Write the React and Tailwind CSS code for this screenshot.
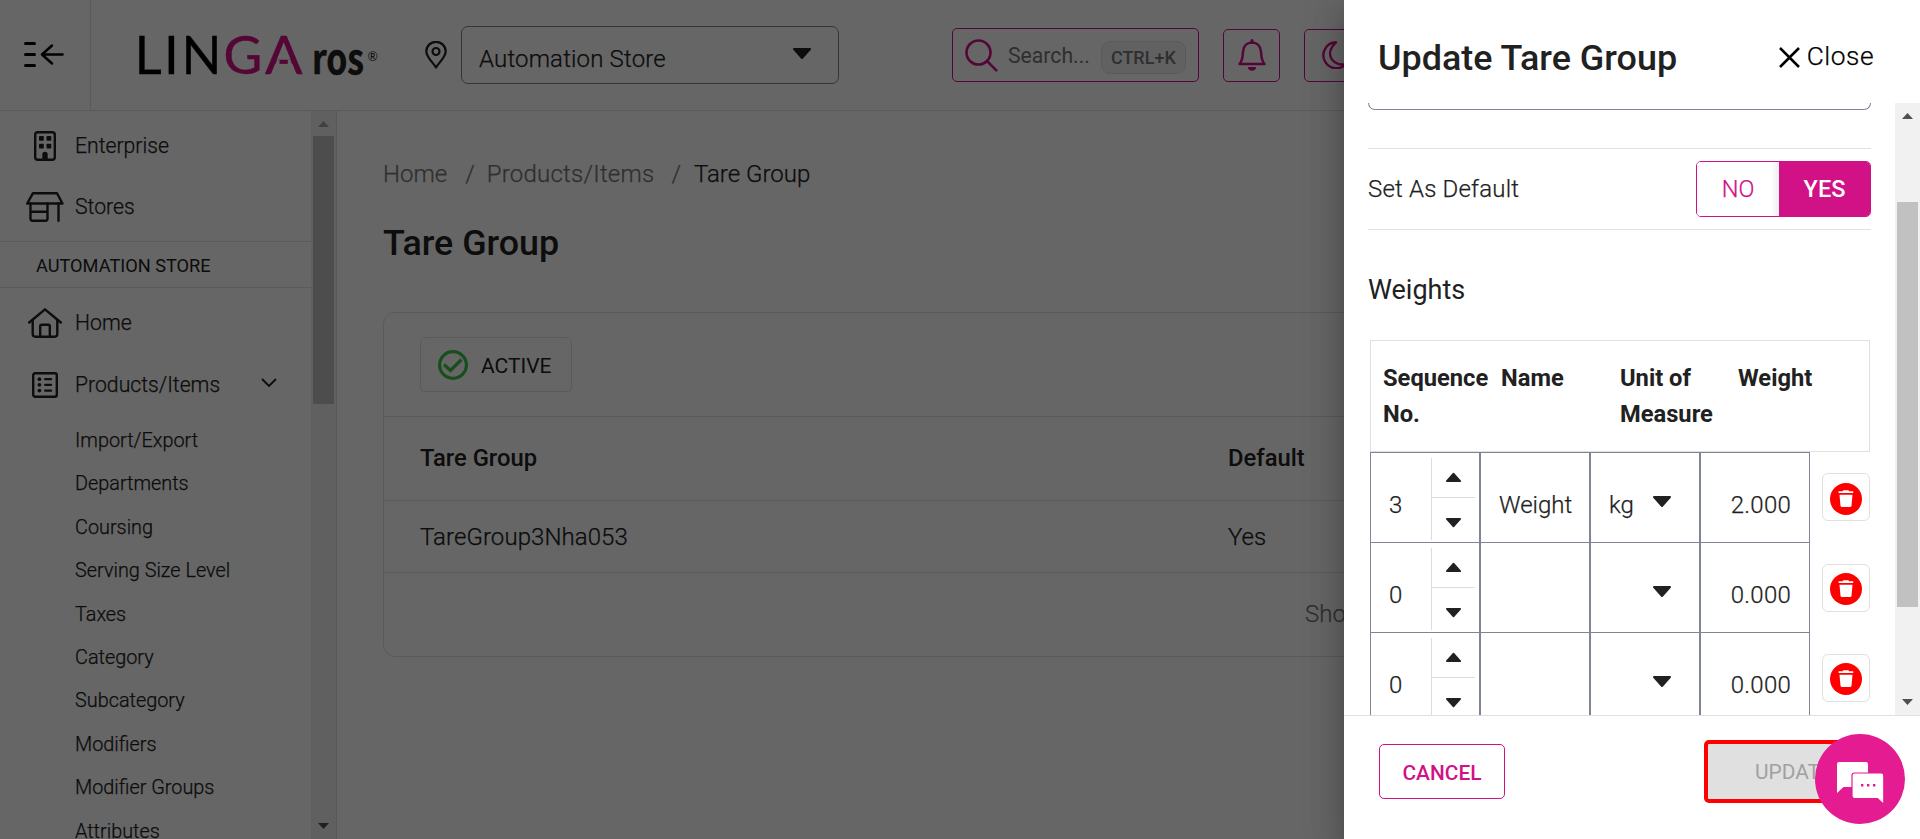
import React from "react";

const SUB_ITEMS = [
  "Import/Export", "Departments", "Coursing", "Serving Size Level", "Taxes",
  "Category", "Subcategory", "Modifiers", "Modifier Groups", "Attributes",
];

const ROWS = [
  { seq: "3", name: "Weight", unit: "kg", weight: "2.000" },
  { seq: "0", name: "", unit: "", weight: "0.000" },
  { seq: "0", name: "", unit: "", weight: "0.000" },
];

function Caret({ up = false, className = "" }) {
  return (
    <svg viewBox="0 0 20 12" className={`block shrink-0 ${className}`}>
      <path
        d={up ? "M2 11H18L10 2Z" : "M2 1H18L10 10Z"}
        fill="#212121" stroke="#212121" strokeWidth="2" strokeLinejoin="round"
      />
    </svg>
  );
}

function MenuIcon() {
  return (
    <svg width="40" height="28" viewBox="0 0 40 28" fill="none" stroke="#000" strokeLinecap="round" className="mb-[2px]">
      <path d="M1.5 3.500h9M1.5 14.500h9M1.5 25.500h9" strokeWidth="3" />
      <path d="M38.500 14.500H18M28 5.500l-10 9 10 9" strokeWidth="2.500" strokeLinejoin="round" />
    </svg>
  );
}

function Logo() {
  return (
    <svg width="246" height="50" viewBox="0 0 246 50" className="shrink-0 overflow-visible">
      <g fontFamily="Lato" fontWeight="400" fontSize="53" fill="#000" stroke="#000" strokeWidth="0.300">
        <text x="0.500" y="44">L</text>
        <text x="30" y="44">I</text>
        <text x="47.500" y="44" textLength="40" lengthAdjust="spacingAndGlyphs">N</text>
      </g>
      <g fontFamily="Lato" fontWeight="400" fontSize="53" fill="#d10f85" stroke="#d10f85" strokeWidth="0.500">
        <text x="89.500" y="44">G</text>
        <text x="131" y="44" textLength="37.500" lengthAdjust="spacingAndGlyphs">A</text>
      </g>
      <path d="M140.800 36 143 30H145.500V36zM153.800 30H156.500L158.700 36H153.800z" fill="#fff" />
      <text x="178" y="44" fontFamily="Noto Sans CJK SC" fontWeight="700" fontSize="41" fill="#212121" stroke="#212121" strokeWidth="0.500" textLength="52" lengthAdjust="spacingAndGlyphs">ros</text>
      <text x="233.500" y="31" fontFamily="Lato" fontWeight="400" fontSize="12.500" fill="#212121">®</text>
    </svg>
  );
}

function EnterpriseIcon() {
  return (
    <svg width="22" height="30" viewBox="0 0 22 30" fill="#212121">
      <rect x="1.200" y="1.200" width="19.600" height="27.600" rx="2.500" fill="none" stroke="#212121" strokeWidth="2.400" />
      <rect x="5" y="5" width="4.800" height="4.800" rx=".8" />
      <rect x="12.500" y="5" width="4.800" height="4.800" rx=".8" />
      <rect x="5" y="12.800" width="4.800" height="4.800" rx=".8" />
      <rect x="12.500" y="12.800" width="4.800" height="4.800" rx=".8" />
      <path d="M8.300 29v-5.500a2.700 2.700 0 0 1 5.400 0V29z" />
    </svg>
  );
}

function StoresIcon() {
  return (
    <svg width="38" height="30" viewBox="0 0 38 30" fill="none" stroke="#212121" strokeWidth="2.400" strokeLinejoin="round" strokeLinecap="round">
      <path d="M7 1.200H31L36.500 11.500H1.200Z" />
      <path d="M4.500 11.500V27a1.700 1.700 0 0 0 1.700 1.700h13.600a1.700 1.700 0 0 0 1.700-1.700V11.500M4.500 19.800h17M32.500 11.500V28.700" />
    </svg>
  );
}

function HomeIcon() {
  return (
    <svg width="34" height="30" viewBox="0 0 34 30" fill="none" stroke="#212121" strokeWidth="2.400" strokeLinejoin="round" strokeLinecap="round">
      <path d="M1.200 14.500 17 1.300 32.800 14.500" />
      <path d="M4.700 12v14a2.800 2.800 0 0 0 2.800 2.700h19a2.800 2.800 0 0 0 2.800-2.700V12" />
      <path d="M12.200 28.500V18.300a1.500 1.500 0 0 1 1.500-1.500h6.600a1.500 1.500 0 0 1 1.500 1.500v10.200" />
    </svg>
  );
}

function ListIcon() {
  return (
    <svg width="26" height="26" viewBox="0 0 26 26" fill="#212121">
      <rect x="1.200" y="1.200" width="23.600" height="23.600" rx="2" fill="none" stroke="#212121" strokeWidth="2.400" />
      {[7.2, 12.8, 18.6].map((y) => (
        <g key={y}>
          <circle cx="7.400" cy={y} r="1.900" />
          <rect x="12" y={y - 1.15} width="8.200" height="2.300" rx="1.100" />
        </g>
      ))}
    </svg>
  );
}

function TrashIcon() {
  return (
    <svg width="32" height="32" viewBox="0 0 32 32" fill="#fff">
      <circle cx="16" cy="16" r="16" fill="#f00" />
      <path d="M8.600 8.200h4l.8-1h5l.8 1h4v1.800H8.600z" />
      <path d="M9.500 11.800h13l-1 11a1.400 1.400 0 0 1-1.400 1.300h-8.200a1.400 1.400 0 0 1-1.400-1.300z" />
    </svg>
  );
}

function ChatIcon() {
  return (
    <svg width="47" height="43" viewBox="0 0 47 43">
      <path d="M2 0h27a2 2 0 0 1 2 2v21a2 2 0 0 1-2 2H6.500L0 31V2a2 2 0 0 1 2-2z" fill="#fff" />
      <path d="M17.500 11h26.800a2.500 2.500 0 0 1 2.500 2.500V42.500L40.500 36.500H17.500A2.500 2.500 0 0 1 15 34V13.500A2.500 2.500 0 0 1 17.500 11z" fill="#fff" stroke="#e41b91" strokeWidth="1.200" />
      <path d="M24 22h2.400v2.400H24zM30 22h2.400v2.400H30zM36 22h2.400v2.400H36z" fill="#e41b91" />
    </svg>
  );
}

function ScrollTrack({ thumb, spacer, up }) {
  return (
    <div className="flex w-[25px] shrink-0 flex-col items-center bg-[#f1f1f1]">
      <div className="flex h-[25px] w-full shrink-0 items-center justify-center">
        <svg width="11" height="6" viewBox="0 0 11 6"><path d="M0 6 5.500 0 11 6z" fill={up} /></svg>
      </div>
      <div className={`shrink-0 ${spacer}`} />
      <div className={`w-[21px] shrink-0 bg-[#c1c1c1] ${thumb}`} />
      <div className="flex w-full flex-1 items-end justify-center pb-[10px]">
        <svg width="11" height="6" viewBox="0 0 11 6"><path d="M0 0 5.500 6 11 0z" fill="#505050" /></svg>
      </div>
    </div>
  );
}

function NavRow({ icon, label, height, children }) {
  return (
    <div className={`flex shrink-0 items-center ${height}`}>
      <span className="flex w-[38px] shrink-0 justify-center">{icon}</span>
      <span className="ml-[11px] text-[21.200px] leading-none">{label}</span>
      {children}
    </div>
  );
}

function Header() {
  return (
    <header className="flex h-[111px] shrink-0 items-center border-b border-[#e0e0e0]">
      <div className="flex h-full w-[91px] items-center border-r border-[#e0e0e0] pl-6"><MenuIcon /></div>
      <div className="mb-[1px] ml-[43px]"><Logo /></div>
      <svg width="22" height="28" viewBox="0 0 22 28" className="mb-[1px] ml-[45px] shrink-0" fill="none" stroke="#212121" strokeWidth="2.200">
        <path d="M11 26.500C8 21.500 1.300 16 1.300 10.500a9.700 9.700 0 0 1 19.400 0C20.700 16 14 21.500 11 26.500z" strokeLinejoin="round" />
        <circle cx="11" cy="10.500" r="3.500" />
      </svg>
      <div className="ml-[14px] flex h-[58px] w-[378px] items-center justify-between rounded-[7px] border border-[#7f8594] pl-[17px] pr-[26px]">
        <span className="pt-[7px] text-[24px] leading-none tracking-[.007em]">Automation Store</span>
        <Caret className="mb-[3px] h-[12px] w-[20px]" />
      </div>
      <div className="ml-[113px] flex h-[54px] w-[247px] items-center rounded-[5px] border border-[#d01286] pl-3">
        <svg width="33" height="33" viewBox="0 0 33 33" fill="none" stroke="#d01286" strokeWidth="2.600" strokeLinecap="round">
          <circle cx="13.500" cy="13.500" r="12" /><path d="M22 22 31.300 31.300" />
        </svg>
        <span className="ml-[10px] pt-[2px] text-[21.200px] font-normal leading-none text-[#757575]">Search...</span>
        <span className="ml-[11px] mt-[5px] flex h-[33px] w-[85px] items-center justify-center rounded-[9px] border border-[#e0e0e0] bg-[#f3f3f3] text-[18px] font-medium leading-none text-[#757575]">CTRL+K</span>
      </div>
      <div className="ml-6 flex h-[53px] w-[57px] items-center justify-center rounded-[5px] border border-[#d01286]">
        <svg width="28" height="32" viewBox="0 0 28 32" fill="none" stroke="#d01286" strokeWidth="2.500" strokeLinejoin="round">
          <path d="M1.500 25C5 21 4.500 17 5 12.500 5.500 7 9 3.500 14 3.500S22.500 7 23 12.500C23.500 17 23 21 26.500 25Z" />
          <path d="M14 1.600v2" strokeWidth="3" strokeLinecap="round" />
          <path d="M10 28h8a4 3.800 0 0 1-8 0z" fill="#d01286" stroke="none" />
        </svg>
      </div>
      <div className="ml-6 flex h-[53px] w-[57px] items-center justify-center rounded-[5px] border border-[#d01286] pl-[4px]">
        <svg width="28" height="28" viewBox="0 0 28 28" fill="none" stroke="#d01286" strokeWidth="2.400" strokeLinejoin="round">
          <path d="M15 1.300A13 13 0 1 0 25.500 22.500C14 27 1.500 14 15 1.300z" />
        </svg>
      </div>
    </header>
  );
}

function Sidebar() {
  return (
    <aside className="flex w-[337px] shrink-0 border-r border-[#dedede]">
      <div className="flex h-[728px] w-[311px] flex-col overflow-hidden">
        <div className="h-[131px] shrink-0 border-b border-[#e0e0e0] pl-[26px] pt-[4px]">
          <NavRow height="h-[61px]" icon={<EnterpriseIcon />} label="Enterprise" />
          <NavRow height="h-[61px]" icon={<StoresIcon />} label="Stores" />
        </div>
        <div className="flex h-[46px] shrink-0 items-center border-b border-[#e0e0e0] pl-9 pt-[3px] text-[18.200px] font-normal leading-none">AUTOMATION STORE</div>
        <div className="shrink-0 pl-[26px] pt-1">
          <NavRow height="h-[62px]" icon={<HomeIcon />} label="Home" />
          <NavRow height="h-[61px]" icon={<ListIcon />} label="Products/Items">
            <svg width="16" height="10" viewBox="0 0 16 10" className="mb-[3px] ml-[41px]" fill="none" stroke="#212121" strokeWidth="1.900"><path d="M1 1l7 7 7-7" /></svg>
          </NavRow>
        </div>
        <div className="flex shrink-0 flex-col pl-[75px] pt-[4px]">
          {SUB_ITEMS.map((t) => (
            <span key={t} className="flex h-[43.450px] items-center text-[19.850px] leading-none">{t}</span>
          ))}
        </div>
      </div>
      <ScrollTrack spacer="h-0" thumb="h-[268px]" up="#a3a3a3" />
    </aside>
  );
}

function Main() {
  return (
    <main className="flex-1 pl-[46px] pr-[46px]">
      <div className="flex h-[115px] items-center pt-[11px] text-[24px] leading-none text-[#757575]">
        <span>Home</span><span className="ml-[18px]">/</span>
        <span className="ml-[12px] tracking-[.010em]">Products/Items</span><span className="ml-[17px]">/</span>
        <span className="ml-[13px] text-[#212121]">Tare Group</span>
      </div>
      <h1 className="h-[86px] text-[35.800px] font-medium leading-none text-[#212121]">Tare Group</h1>
      <section className="h-[345px] rounded-[12px] border border-[#e0e0e0]">
        <div className="flex h-[104px] items-center border-b border-[#e0e0e0] pl-9">
          <div className="flex h-[55px] w-[152px] items-center rounded-[5px] border border-[#e0e0e0] pl-[17px]">
            <svg width="30" height="30" viewBox="0 0 30 30" fill="none" stroke="#3ac447" strokeWidth="3.200">
              <circle cx="15" cy="15" r="13.400" /><path d="M6 14.500l6.500 6L23.500 9.500" />
            </svg>
            <span className="ml-[13px] pt-[3px] text-[21px] font-normal leading-none">ACTIVE</span>
          </div>
        </div>
        <div className="flex h-[84px] items-center border-b border-[#e0e0e0] pl-9 pt-[1px] text-[23.800px] font-medium leading-none">
          <span className="w-[808px]">Tare Group</span><span>Default</span>
        </div>
        <div className="flex h-[72px] items-center border-b border-[#e0e0e0] pl-9 text-[24px] leading-none">
          <span className="w-[808px] tracking-[.003em]">TareGroup3Nha053</span><span>Yes</span>
        </div>
        <div className="flex h-[83px] items-center pb-[1px] pl-[921px] text-[24px] leading-none text-[#757575]">Showing</div>
      </section>
    </main>
  );
}

function Drawer() {
  return (
    <div className="absolute inset-y-0 right-0 flex w-[576px] flex-col bg-white shadow-[0_10px_13px_-6px_rgba(0,0,0,.2),0_20px_31px_3px_rgba(0,0,0,.14),0_8px_38px_7px_rgba(0,0,0,.12)]">
      <div className="flex h-[103px] shrink-0 items-center justify-between pl-[34px] pr-[46px] pt-[12px]">
        <h2 className="pt-[2px] text-[35.900px] font-medium leading-none">Update Tare Group</h2>
        <div className="flex items-center text-black">
          <svg width="21" height="21" viewBox="0 0 21 21" className="mr-[7px]" stroke="#000" strokeWidth="2.500"><path d="M1 1l19 19M20 1 1 20" /></svg>
          <span className="mb-[2px] text-[26.300px] leading-none tracking-[.02em]">Close</span>
        </div>
      </div>
      <div className="flex h-[612px] shrink-0 justify-between overflow-hidden">
        <div className="ml-6 w-[503px]">
          <div className="h-[7px] rounded-b-[7px] border border-t-0 border-[#7f8594]" />
          <div className="mt-[38px] flex h-[82px] items-center justify-between border-y border-[#dee0e4]">
            <span className="pb-[1px] text-[24px] leading-none tracking-[.008em]">Set As Default</span>
            <div className="flex h-[56px] w-[175px] overflow-hidden rounded-[5px] border border-[#d01286] text-[23.500px] leading-none">
              <span className="flex w-[82px] items-center justify-center bg-linear-to-r from-white from-90% to-[#eeeeee] pt-[2px] text-[#d01286]">NO</span>
              <span className="flex flex-1 items-center justify-center bg-[#d01286] pt-[2px] font-medium text-white">YES</span>
            </div>
          </div>
          <h3 className="mt-[47px] h-[63px] text-[27px] font-normal leading-none">Weights</h3>
          <div className="ml-[2px] w-[500px]">
            <div className="flex h-[112px] border border-[#e0e0e0] pl-[12px] pt-[19px] text-[23.700px] font-bold leading-[36px]">
              <span className="w-[118px]">Sequence<br />No.</span>
              <span className="w-[119px]">Name</span>
              <span className="w-[118px]">Unit of<br />Measure</span>
              <span>Weight</span>
            </div>
            {ROWS.map((r, i) => (
              <div key={i} className="flex h-[90px] justify-between text-[24px] leading-none">
                <div className="flex w-[440px] border-l border-t border-[#7f8594]">
                  <div className="flex w-[110px] justify-between border-r-2 border-[#7f8594] pl-[18px] pr-1">
                    <span className="self-center pt-[15px]">{r.seq}</span>
                    <div className="mb-[2px] mt-[5px] flex w-[44px] flex-col border-l border-[#dcdcdc]">
                      <span className="flex h-[40px] items-center justify-center border-b border-[#dcdcdc] pb-[2px]"><Caret up className="h-[10px] w-[17px]" /></span>
                      <span className="flex flex-1 items-center justify-center pt-2"><Caret className="h-[10px] w-[17px]" /></span>
                    </div>
                  </div>
                  <div className="flex w-[110px] items-center border-r-2 border-[#7f8594] pl-[18px] pt-[15px]">{r.name}</div>
                  <div className="flex w-[110px] items-center justify-between border-r-2 border-[#7f8594] pl-[18px] pr-[27px]">
                    <span className="pt-[15px]">{r.unit}</span><Caret className="mt-[9px] h-[12px] w-[20px]" />
                  </div>
                  <div className="flex w-[109px] items-center justify-end border-r border-[#7f8594] pr-[18px] pt-[15px] tracking-[.01em]">{r.weight}</div>
                </div>
                <div className={`flex h-[48px] w-[48px] items-center justify-center rounded-[6px] border border-[#e0e0e0] ${i ? "mt-[22px] pt-[2px]" : "mt-[21px] pt-[4px]"}`}><TrashIcon /></div>
              </div>
            ))}
          </div>
        </div>
        <ScrollTrack spacer="h-[74px]" thumb="h-[405px]" up="#505050" />
      </div>
      <div className="flex flex-1 items-center justify-between border-t border-[#e0e0e0] pb-[13px] pl-[35px] pr-[47px]">
        <button className="h-[55px] w-[126px] rounded-[5px] border border-[#d01286] pt-[4px] text-[20.900px] font-medium leading-none text-[#d01286]">CANCEL</button>
        <button className="h-[63px] w-[169px] rounded-[5px] border-4 border-[#f00] bg-[#e0e0e0] pl-[10px] pt-[3px] text-[20.900px] font-normal leading-none text-[#a0a0a0]">UPDATE</button>
      </div>
      <div className="absolute bottom-[15px] right-[15px] flex h-[90px] w-[90px] items-center justify-center rounded-full bg-[#e41b91] pt-[9px]"><ChatIcon /></div>
    </div>
  );
}

export default function App() {
  return (
    <div className="relative flex h-[839px] w-[1920px] flex-col overflow-hidden bg-white font-['Roboto',sans-serif] font-light text-[#212121] [-webkit-text-stroke:.25px] [&_.font-bold]:[-webkit-text-stroke:0px] [&_.font-medium]:[-webkit-text-stroke:0px] [&_.font-normal]:[-webkit-text-stroke:0px]">
      <Header />
      <div className="flex h-[728px]"><Sidebar /><Main /></div>
      <div className="absolute inset-0 bg-black/60" />
      <Drawer />
    </div>
  );
}
